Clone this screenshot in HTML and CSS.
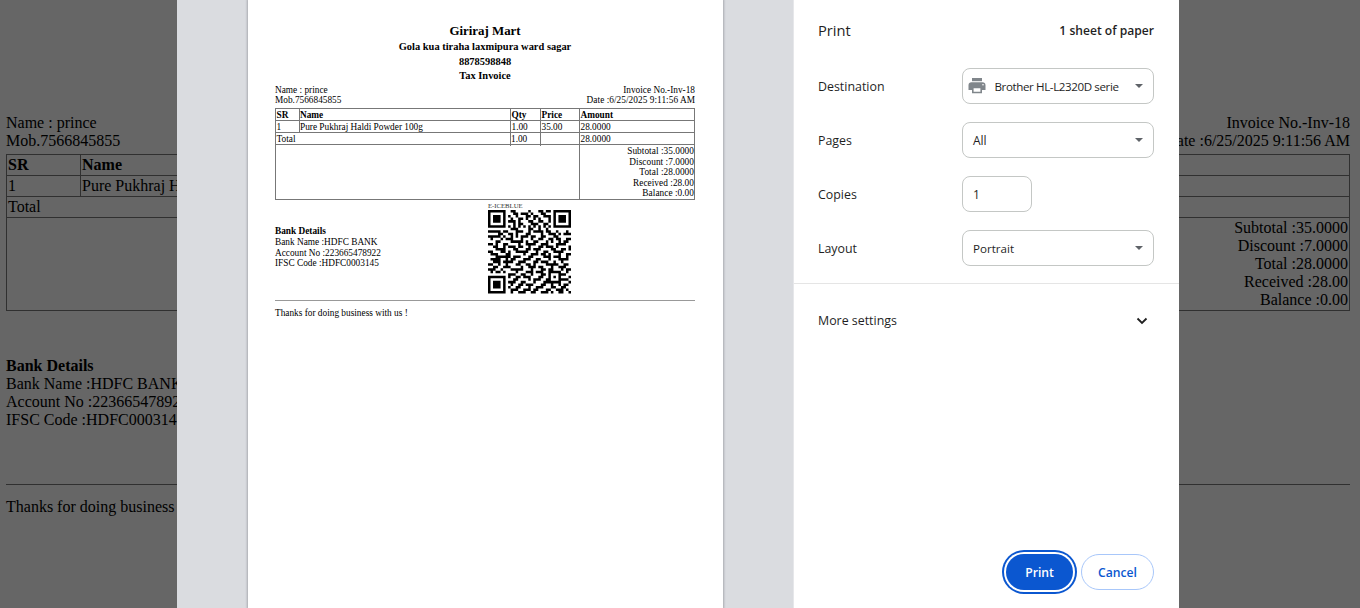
FILE: index.html
```html
<!DOCTYPE html>
<html lang="en">
<head>
<meta charset="utf-8">
<title>Print invoice</title>
<link rel="stylesheet" href="styles.css">
</head>
<body>
<main class="invoice">
  <div class="parties">
    <div>Name : prince<br>Mob.7566845855</div>
    <div class="right">Invoice No.-Inv-18<br>Date :6/25/2025 9:11:56 AM</div>
  </div>
  <div class="table">
    <div class="row"><b class="sr">SR</b><b>Name</b></div>
    <div class="row"><span class="sr">1</span><span>Pure Pukhraj Haldi</span></div>
    <div class="row"><span>Total</span></div>
    <div class="summary">Subtotal :35.0000<br>Discount :7.0000<br>Total :28.0000<br>Received :28.00<br>Balance :0.00</div>
  </div>
  <div class="bank"><b>Bank Details</b><br>Bank Name :HDFC BANK<br>Account No :223665478922<br>IFSC Code :HDFC0003145</div>
  <hr class="rule">
  <div class="thanks">Thanks for doing business</div>
</main>

<div class="dialog">
  <section class="preview">
    <article class="sheet">
      <header class="heading">
        <h1>Giriraj Mart</h1>
        <p class="address">Gola kua tiraha laxmipura ward sagar</p>
        <p class="phone">8878598848</p>
        <p class="kind">Tax Invoice</p>
      </header>
      <div class="s-parties">
        <div>Name : prince<br>Mob.7566845855</div>
        <div class="right">Invoice No.-Inv-18<br><span class="date">Date :6/25/2025 9:11:56 AM</span></div>
      </div>
      <div class="s-table">
        <div class="s-row s-head"><b>SR</b><b>Name</b><b>Qty</b><b>Price</b><b>Amount</b></div>
        <div class="s-row"><span>1</span><span>Pure Pukhraj Haldi Powder 100g</span><span>1.00</span><span>35.00</span><span>28.0000</span></div>
        <div class="s-row"><span class="wide">Total</span><span>1.00</span><span></span><span>28.0000</span></div>
        <div class="s-sum"><div class="stubs"><i></i><i></i></div><div class="amounts">Subtotal :35.0000<br>Discount :7.0000<br>Total :28.0000<br>Received :28.00<br>Balance :0.00</div></div>
      </div>
      <div class="s-foot">
        <div class="s-bank"><b>Bank Details</b><br>Bank Name :HDFC BANK<br>Account No :223665478922<br>IFSC Code :HDFC0003145</div>
        <div class="code"><span>E-ICEBLUE</span><svg id="qr" viewBox="0 0 33 33" preserveAspectRatio="none"></svg></div>
      </div>
      <div class="s-thanks">Thanks for doing business with us !</div>
    </article>
  </section>
  <aside class="panel">
    <header class="top"><span class="title">Print</span><span class="count">1 sheet of paper</span></header>
    <div class="settings">
      <div class="field"><span>Destination</span><div class="select">
        <svg class="printer" viewBox="0 0 18 16"><path d="M4 0h10v3.2H4z" fill="#80868b"/><path d="M3.5 4.2h11A3 3 0 0 1 17.5 7v5H14V9H4v3H.5V7a3 3 0 0 1 3-2.800z" fill="#80868b"/><path d="M4.800 9.500h8.400v5H4.800z" fill="#fff" stroke="#80868b" stroke-width="1.600"/><circle cx="15" cy="6.700" r=".8" fill="#fff"/></svg>
        <span class="device">Brother HL-L2320D serie</span><i class="arrow"></i></div></div>
      <div class="field"><span>Pages</span><div class="select"><span>All</span><i class="arrow"></i></div></div>
      <div class="field"><span>Copies</span><div class="select small"><span>1</span></div></div>
      <div class="field"><span>Layout</span><div class="select"><span class="portrait">Portrait</span><i class="arrow"></i></div></div>
    </div>
    <div class="more"><span>More settings</span><svg viewBox="0 0 12 8"><path d="M1.500 1.500 6 6l4.500-4.500" fill="none" stroke="#1f1f1f" stroke-width="1.800"/></svg></div>
    <footer class="actions"><button class="print">Print</button><button class="cancel">Cancel</button></footer>
  </aside>
</div>
<script src="qr.js"></script>
</body>
</html>
```
FILE: styles.css
```css
* { box-sizing: border-box; }
body { margin: 0; width: 1360px; height: 608px; overflow: hidden; background: #666; color: #000; font-family: "Liberation Serif", "Times New Roman", serif; }
h1, p { margin: 0; }
.right { text-align: right; }

.invoice { padding: 114px 10px 0 6px; font-size: 16px; line-height: 18px; }
.parties { display: flex; justify-content: space-between; }
.table { margin-top: 4px; border: 1px solid #303030; height: 157px; }
.row { display: flex; height: 21px; border-bottom: 1px solid #303030; line-height: 20px; }
.row > * { padding-left: 1px; }
.row .sr { width: 74px; border-right: 1px solid #303030; }
.summary { text-align: right; padding: 1px 1px 0; }
.bank { margin-top: 46px; }
.rule { margin: 55px 0 0; border: 0; border-top: 1px solid #303030; }
.thanks { margin-top: 13px; }

.dialog { position: absolute; left: 177px; top: 0; width: 1002px; height: 608px; display: flex; background: #fff; }
.preview { width: 617px; padding-left: 71px; background: #dadce0; border-right: 1px solid #e6e7ea; }
.sheet { width: 475px; height: 608px; padding: 23px 28px 0 27px; background: #fff; box-shadow: 0 0 2px 1px #a9abb0; font-size: 9.300px; line-height: 10.440px; }
.heading { text-align: center; font-weight: bold; }
.heading h1 { font-size: 12.900px; line-height: 16px; }
.heading p { font-size: 10.450px; line-height: 14.400px; }
.heading .address { line-height: 16px; }
.s-parties { display: flex; justify-content: space-between; margin: 1.200px 0 2.500px; }
.date { letter-spacing: .04px; }
.s-table { border: 1px solid #777; height: 92px; }
.s-row { display: grid; grid-template-columns: 24px 211px 30px 39px 1fr; height: 12px; border-bottom: 1px solid #777; line-height: 12px; }
.s-row > * { padding-left: .5px; border-right: 1px solid #777; white-space: nowrap; }
.s-row > :nth-child(2) { padding-left: 0; }
.s-row > :last-child { border-right: 0; }
.s-row .wide { grid-column: span 2; }
.s-sum { display: grid; grid-template-columns: 304px 1fr; height: 54px; }
.stubs { display: grid; grid-template-columns: 235px 30px; border-right: 1px solid #777; }
.stubs i { height: 1px; border-right: 1px solid #777; }
.amounts { text-align: right; padding-top: 1px; letter-spacing: .04px; }
.s-foot { display: flex; height: 101px; border-bottom: 1px solid #999; }
.s-bank { width: 213px; padding: 26px 0 0; line-height: 10.600px; }
.code { display: flex; flex-direction: column; font-size: 6.700px; line-height: 8px; padding-top: 2px; color: #333; }
.code svg { width: 83px; height: 83.500px; }
.s-thanks { padding: 7px 0 0; }

.panel { width: 385px; display: flex; flex-direction: column; color: #1f1f1f; font-family: "Open Sans", "Noto Sans", sans-serif; font-size: 12.400px; }
.top { height: 60px; padding: 0 25px 0 24px; display: flex; align-items: center; justify-content: space-between; }
.title { font-size: 14.700px; }
.count { font-weight: 600; font-size: 12.100px; }
.settings { height: 224px; padding: 8px 25px 0 24px; display: flex; flex-direction: column; gap: 18px; border-bottom: 1px solid #e5e5e5; }
.field { display: flex; justify-content: space-between; align-items: center; height: 36px; }
.select { width: 192px; height: 36px; border: 1px solid #c4c7c5; border-radius: 8px; padding: 0 10px; display: flex; align-items: center; justify-content: space-between; font-size: 12px; }
.small { width: 70px; margin-right: 122px; }
.portrait { font-size: 11.600px; }
.printer { width: 18px; height: 16px; margin-left: -5px; flex: none; }
.device { width: 127px; flex: none; overflow: hidden; white-space: nowrap; margin: 0 9px 0 4px; font-size: 11.600px; letter-spacing: -.4px; }
.arrow { border: 4px solid transparent; border-top: 4px solid #5f6368; border-bottom: 0; flex: none; }
.more { padding: 0 31px 0 24px; height: 73px; display: flex; align-items: center; justify-content: space-between; }
.more svg { width: 12px; height: 8px; }
.actions { margin-top: auto; padding: 0 25px 18px; display: flex; justify-content: flex-end; gap: 8px; }
.actions button { height: 36px; border-radius: 18px; font: 600 12.200px "Open Sans", sans-serif; padding: 0; }
.print { width: 67px; border: 0; background: #0b57d0; color: #fff; box-shadow: 0 0 0 2px #fff, 0 0 0 4px #0b57d0; }
.actions .cancel { width: 73px; background: #fff; border: 1px solid #a8c7fa; color: #0b57d0; }
```
FILE: qr.js
```js
const rows = [
  "111111100110000010001101101111111",
  "100000100011011101000110001000001",
  "101110101001000110110011101011101",
  "101110100100110100101000101011101",
  "101110101110100011001100101011101",
  "100000100010110001110011001000001",
  "111111101010101010101010101111111",
  "000000000111000011001001000000000",
  "111110110001110010111101100100010",
  "000011001101000110000100111010111",
  "111110100101011101100110001100000",
  "010001011100010001001100110110011",
  "000110000111110100110001010010110",
  "110100110000100111100111000111100",
  "001100101110110010001101110100001",
  "000111100011000110111000011001101",
  "110001101001111100010011001111000",
  "011100011000001001110110100010011",
  "000111111011100011000011101110010",
  "011110010110001110011000100011110",
  "001110111100111000110111001001000",
  "110010010001100110100001111100110",
  "001100111000010011101100010011100",
  "111001000111110001000110110001011",
  "010110100001000111011100111110010",
  "000000001110011001000110100011100",
  "111111101001101110001100101010001",
  "100000100011000010111001100011110",
  "101110101110011000100011111110001",
  "101110100100110111000110010010110",
  "101110101001100010011100011001100",
  "100000100111001110110001100111010",
  "111111100100111001100111010011001"
];
document.getElementById("qr").innerHTML = `<path fill="#000" d="${rows.map((r, y) =>
  r.replace(/1+/g, (run, x) => "#" + x + "," + run.length + ";").split("#").slice(1).map(s => {
    const [x, w] = s.split(";")[0].split(",");
    return `M${x} ${y}h${w}v1h-${w}z`;
  }).join("")).join("")}"/>`;
```
